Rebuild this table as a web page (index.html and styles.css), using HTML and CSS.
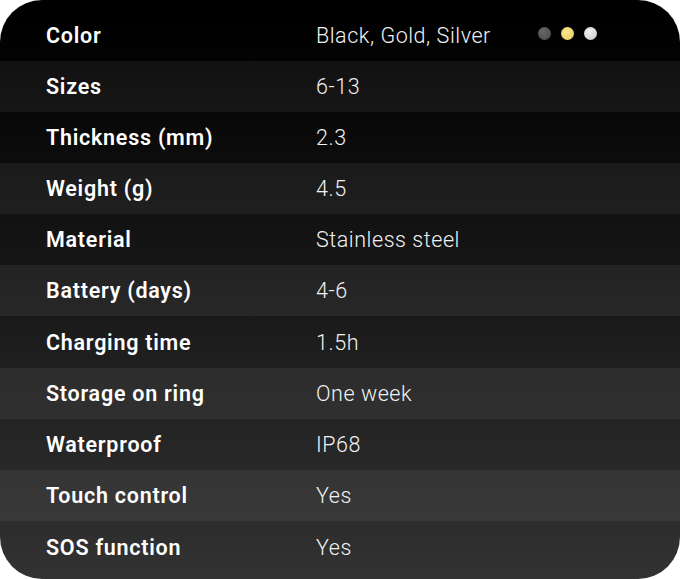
FILE: index.html
```html
<!DOCTYPE html>
<html lang="en">
<head>
<meta charset="utf-8">
<title>Specs</title>
<link rel="stylesheet" href="styles.css">
</head>
<body>
<div class="card">
  <div class="row first">
    <div class="label">Color</div>
    <div class="value colors">Black, Gold, Silver</div>
    <div class="dots">
      <span class="dot black"></span>
      <span class="dot gold"></span>
      <span class="dot silver"></span>
    </div>
  </div>
  <div class="row alt"><div class="label">Sizes</div><div class="value">6-13</div></div>
  <div class="row"><div class="label">Thickness (mm)</div><div class="value">2.3</div></div>
  <div class="row alt"><div class="label">Weight (g)</div><div class="value">4.5</div></div>
  <div class="row"><div class="label">Material</div><div class="value">Stainless steel</div></div>
  <div class="row alt"><div class="label">Battery (days)</div><div class="value">4-6</div></div>
  <div class="row"><div class="label">Charging time</div><div class="value">1.5h</div></div>
  <div class="row alt"><div class="label">Storage on ring</div><div class="value">One week</div></div>
  <div class="row"><div class="label">Waterproof</div><div class="value">IP68</div></div>
  <div class="row alt"><div class="label">Touch control</div><div class="value">Yes</div></div>
  <div class="row last"><div class="label">SOS function</div><div class="value">Yes</div></div>
</div>
</body>
</html>
```

FILE: styles.css
```css
html, body {
  margin: 0;
  padding: 0;
  background: #ffffff;
}

.card {
  width: 680px;
  height: 579px;
  box-sizing: border-box;
  border-radius: 42px;
  overflow: hidden;
  background: linear-gradient(to bottom, #000000 0%, #000000 4%, #323232 100%);
  display: flex;
  flex-direction: column;
  font-family: "Roboto", "Inter", sans-serif;
  color: #ffffff;
}

.row {
  height: 51.1px;
  display: flex;
  align-items: center;
  padding-left: 46px;
  flex: none;
}

.row.first {
  height: 61px;
  padding-top: 9px;
  box-sizing: border-box;
}

.row.last {
  flex: 1;
  padding-bottom: 5px;
  box-sizing: border-box;
}

.row.alt {
  background: rgba(255, 255, 255, 0.058);
}

.label {
  width: 270px;
  font-size: 21.5px;
  font-weight: 600;
  letter-spacing: 0.75px;
}

.value {
  font-size: 21.5px;
  font-weight: 300;
  color: #f2f2f2;
  letter-spacing: 0.55px;
}

.value.colors {
  width: 222px;
}

.dots {
  display: flex;
  gap: 10px;
  margin-top: -3px;
}

.dot {
  width: 13px;
  height: 13px;
  border-radius: 50%;
}

.dot.black {
  background: radial-gradient(circle at 40% 35%, #666666, #4a4a4a);
}

.dot.gold {
  background: radial-gradient(circle at 40% 35%, #fbe690, #e6c859);
}

.dot.silver {
  background: radial-gradient(circle at 40% 35%, #f0f0f0, #c8c8c8);
}
```
